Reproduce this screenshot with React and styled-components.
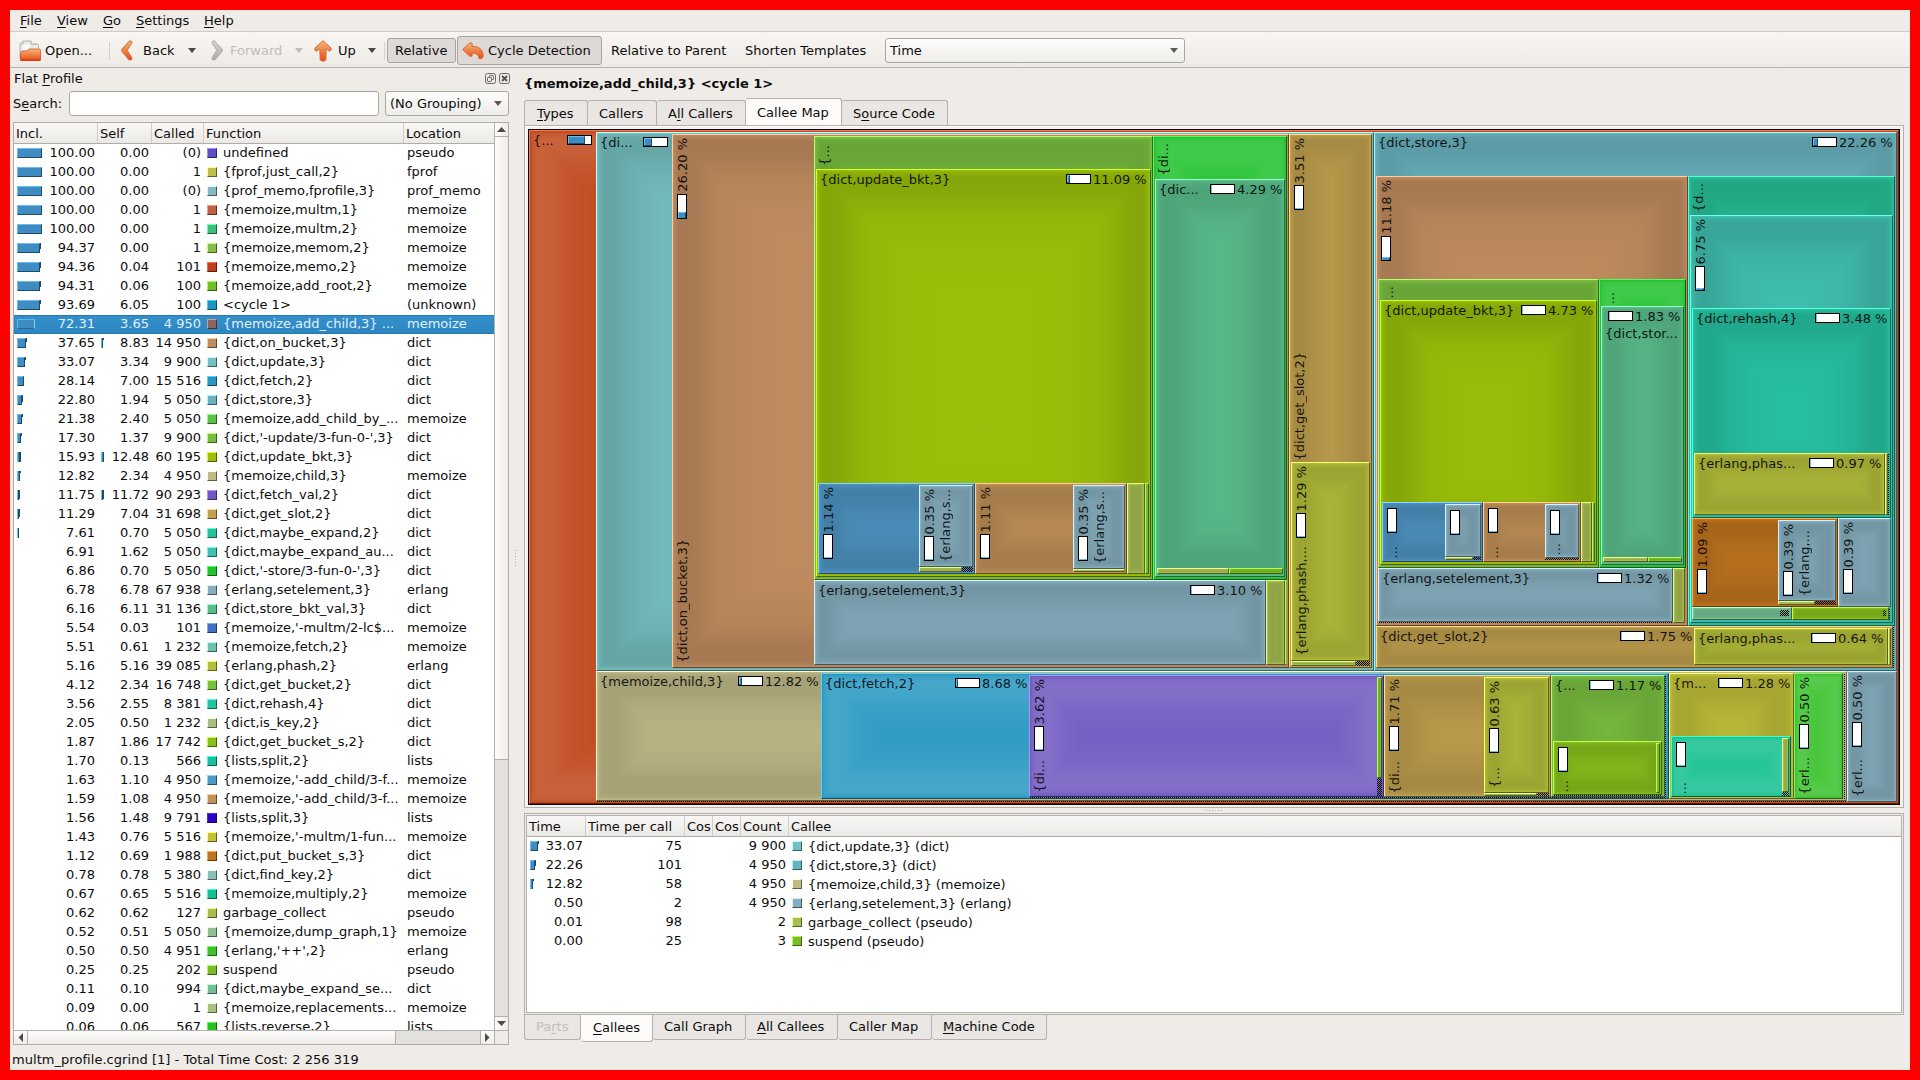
import React from "react";
import styled, { createGlobalStyle, css } from "styled-components";

const GlobalStyle = createGlobalStyle`
  * { box-sizing: border-box; }
  html, body { margin: 0; padding: 0; background: #ff0000; overflow: hidden; }
  body { font-family: "DejaVu Sans", sans-serif; font-size: 13px; line-height: 15px; color: #0c0c0c; }
`;

/* ---------- colour helpers ---------- */

const hexToRgb = (h) => [1, 3, 5].map((i) => parseInt(h.slice(i, i + 2), 16));
const rgb = (c) => `rgb(${c.map((v) => Math.max(0, Math.min(255, Math.round(v)))).join(",")})`;

function lighter(hex, factor = 1.5) {
  const c = hexToRgb(hex);
  const v = Math.max(...c);
  const mn = Math.min(...c);
  let s = v ? ((v - mn) / v) * 255 : 0;
  let nv = v * factor;
  const s0 = s || 1;
  if (nv > 255) {
    s = Math.max(0, s - (nv - 255));
    nv = 255;
  }
  return rgb(c.map((x) => nv * (1 - (1 - x / v) * (s / s0))));
}
const darker = (hex) => rgb(hexToRgb(hex).map((x) => x / 2));

/* concentric one-pixel rings: quick ramp to the edge tone, slow ramp back */
function shadeRings(hex, w, h) {
  const base = hexToRgb(hex);
  const gray = (base[0] * 11 + base[1] * 16 + base[2] * 5) / 32;
  const diff = base.map((b) => (gray > 127.5 ? -b / 7 : (255 - b) / 7));
  const s = Math.min(w, h);
  let forth = 0.7;
  let back1 = 0.9;
  let back2 = 0.97;
  if (s < 100) {
    forth -= (0.3 * (100 - s)) / 100;
    back1 -= (0.2 * (100 - s)) / 100;
    back2 -= (0.02 * (100 - s)) / 100;
  }
  const rings = [];
  let f = 0.1;
  const put = () => rings.push(rgb(base.map((b, i) => Math.floor(b + f * diff[i] + 0.5))));
  const max = Math.ceil(s / 2);
  while (f < 0.95 && rings.length < max) {
    put();
    f = 1 - (1 - f) * forth;
  }
  while (f > 0.7 && rings.length < max) {
    put();
    f = 1 - (1 - f) / back1;
  }
  while (f > 0.01 && rings.length < max) {
    put();
    f *= back2;
  }
  const shadows = [];
  rings.forEach((c, i) => {
    if (i === rings.length - 1 || rings[i + 1] !== c) shadows.push(`inset 0 0 0 ${i + 1}px ${c}`);
  });
  return { boxShadow: shadows.join(","), backgroundColor: rings[rings.length - 1] || hex };
}

/* ---------- function colours ---------- */

const C = {
  addChild: "#c0481c", update: "#76bfc0", onBucket: "#c08c60", updFun: "#7abe40",
  updateBkt: "#9ac00a", stoFun: "#22c22e", storeBkt: "#5abe8c", acFun1: "#4e94c2",
  acFun2: "#c09058", setel: "#86aebe", garbage: "#a8be50", suspend: "#78be28",
  phash: "#b4be3a", getSlot: "#c0a04e", store: "#6ab4c0", expand: "#28c098",
  expandAux: "#40c0b0", rehash: "#26c2a2", putBucket: "#c0741e", expandSe: "#74c494",
  getBucketS: "#88c01c", child: "#c0ba88", fetch: "#2898c2", fetchVal: "#7058c0",
  getBucket: "#7ac040", multm1: "#c0c03a", multiply: "#16c092", plus: "#3cc22e",
};

/* ---------- tree map data: [colour, x, y, w, h, labels, children] ---------- */

const H = (x, y, t) => ({ k: "h", x, y, t });
const V = (x, b, t) => ({ k: "v", x, b, t });
const B = (x, y, p, t) => [{ k: "b", x, y, p }].concat(t ? [H(x + 27, y - 2, t)] : []);
const VB = (x, y, p, t) => [{ k: "vb", x, y, p }].concat(t ? [V(x - 2, y - 2, t)] : []);
const T = (c, x, y, w, h, labels = [], kids = []) => ({ c: C[c], x, y, w, h, labels, kids });
const hatch = (x, y, w, h) => ({ hatch: true, x, y, w, h });

const TREE = T("addChild", 529, 130, 1370, 674, [H(533, 133, "{..."), ...B(567, 135, 0.72)], [
  T("update", 596, 132, 778, 539, [H(600, 135, "{di..."), ...B(643, 137, 0.33)], [
    T("onBucket", 672, 134, 617, 534, [...VB(677, 194, 0.262, "26.20 %"), V(675, 663, "{dict,on_bucket,3}")], [
      T("updFun", 814, 136, 339, 444, [V(817, 166, "{...")], [
        T("updateBkt", 816, 169, 335, 408, [H(820, 172, "{dict,update_bkt,3}"), ...B(1066, 174, 0.11, "11.09 %")], [
          T("acFun1", 818, 483, 157, 91, VB(823, 534, 0.03, "1.14 %"), [
            T("setel", 919, 485, 54, 82, [...VB(924, 536, 0.03, "0.35 %"), V(938, 562, "{erlang,s...")]),
            T("garbage", 919, 567, 43, 5), hatch(962, 567, 11, 5),
          ]),
          T("acFun2", 975, 483, 152, 91, VB(980, 534, 0.03, "1.11 %"), [
            T("setel", 1073, 485, 52, 84, [...VB(1078, 536, 0.03, "0.35 %"), V(1092, 564, "{erlang,s...")]),
            T("garbage", 1073, 569, 52, 3),
          ]),
          T("garbage", 1127, 483, 18, 91),
          T("suspend", 1145, 483, 4, 91),
        ]),
      ]),
      T("stoFun", 1153, 136, 134, 444, [V(1156, 176, "{di...")], [
        T("storeBkt", 1155, 179, 130, 398, [H(1159, 182, "{dic..."), ...B(1210, 184, 0.05, "4.29 %")], [
          T("garbage", 1157, 568, 72, 6), T("suspend", 1229, 568, 54, 6),
        ]),
      ]),
      T("setel", 814, 580, 452, 85, [H(818, 583, "{erlang,setelement,3}"), ...B(1190, 585, 0.03, "3.10 %")]),
      T("garbage", 1266, 580, 19, 85),
      T("suspend", 1285, 580, 2, 85),
    ]),
    T("getSlot", 1289, 134, 83, 534, [...VB(1294, 185, 0.035, "3.51 %"), V(1292, 460, "{dict,get_slot,2}")], [
      T("phash", 1291, 462, 79, 199, [...VB(1296, 513, 0.03, "1.29 %"), V(1294, 656, "{erlang,phash,...")]),
      T("garbage", 1291, 661, 65, 5), hatch(1356, 661, 14, 5),
    ]),
  ]),
  T("store", 1374, 132, 523, 539, [H(1378, 135, "{dict,store,3}"), ...B(1812, 137, 0.2226, "22.26 %")], [
    T("onBucket", 1376, 176, 312, 450, VB(1381, 236, 0.11, "11.18 %"), [
      T("updFun", 1378, 279, 221, 289, [V(1381, 298, "...")], [
        T("updateBkt", 1380, 300, 217, 265, [H(1384, 303, "{dict,update_bkt,3}"), ...B(1521, 305, 0.05, "4.73 %")], [
          T("acFun1", 1382, 502, 101, 60, [...VB(1387, 508, 0.03), V(1385, 558, "...")], [
            T("setel", 1445, 504, 36, 53, VB(1450, 510, 0.03)),
            T("garbage", 1445, 557, 28, 3), hatch(1473, 557, 8, 3),
          ]),
          T("acFun2", 1483, 502, 98, 60, [...VB(1488, 508, 0.03), V(1486, 558, "...")], [
            T("setel", 1545, 504, 34, 54, [...VB(1550, 510, 0.03), V(1548, 555, "...")]),
            hatch(1545, 558, 34, 2),
          ]),
          T("garbage", 1581, 502, 11, 60),
          T("suspend", 1592, 502, 3, 60),
        ]),
      ]),
      T("stoFun", 1599, 279, 87, 289, [V(1602, 304, "...")], [
        T("storeBkt", 1601, 306, 83, 259, [...B(1608, 311, 0.05, "1.83 %"), H(1605, 326, "{dict,stor...")], [
          T("garbage", 1603, 557, 45, 5), T("suspend", 1648, 557, 34, 5),
        ]),
      ]),
      T("setel", 1378, 568, 295, 54, [H(1382, 571, "{erlang,setelement,3}"), ...B(1597, 573, 0.03, "1.32 %")]),
      hatch(1378, 622, 295, 1),
      T("garbage", 1673, 568, 12, 55),
    ]),
    T("expand", 1688, 176, 207, 450, [V(1691, 212, "{d...")], [
      T("expandAux", 1690, 215, 203, 408, VB(1695, 266, 0.0675, "6.75 %"), [
        T("rehash", 1692, 308, 199, 210, [H(1696, 311, "{dict,rehash,4}"), ...B(1815, 313, 0.05, "3.48 %")], [
          T("phash", 1694, 453, 191, 62, [H(1698, 456, "{erlang,phas..."), ...B(1809, 458, 0.03, "0.97 %")]),
          T("garbage", 1885, 453, 3, 62), hatch(1888, 453, 1, 62),
        ]),
        T("putBucket", 1692, 518, 146, 89, VB(1697, 569, 0.03, "1.09 %"), [
          T("setel", 1778, 520, 58, 81, [...VB(1783, 571, 0.03, "0.39 %"), V(1797, 596, "{erlang,...")]),
          T("garbage", 1778, 601, 37, 4), hatch(1815, 601, 21, 4),
        ]),
        T("setel", 1838, 518, 53, 89, VB(1843, 569, 0.03, "0.39 %")),
        T("expandSe", 1692, 607, 100, 13, [], [hatch(1780, 610, 9, 6)]),
        T("getBucketS", 1792, 607, 97, 13, [], [hatch(1883, 610, 3, 6)]),
        hatch(1889, 608, 1, 12),
      ]),
    ]),
    T("getSlot", 1376, 626, 517, 42, [H(1380, 629, "{dict,get_slot,2}"), ...B(1620, 631, 0.03, "1.75 %")], [
      T("phash", 1694, 628, 194, 37, [H(1698, 631, "{erlang,phas..."), ...B(1811, 633, 0.03, "0.64 %")]),
      T("garbage", 1888, 628, 3, 37),
    ]),
    hatch(1893, 626, 1, 42),
  ]),
  T("child", 596, 671, 1251, 130, [H(600, 674, "{memoize,child,3}"), ...B(738, 676, 0.128, "12.82 %")], [
    T("fetch", 821, 673, 848, 126, [H(825, 676, "{dict,fetch,2}"), ...B(955, 678, 0.087, "8.68 %")], [
      T("fetchVal", 1029, 675, 355, 122, [...VB(1034, 726, 0.04, "3.62 %"), V(1032, 793, "{di...")], [
        T("suspend", 1377, 677, 5, 101), hatch(1377, 778, 5, 18),
      ]),
      T("getSlot", 1384, 675, 167, 122, [...VB(1389, 726, 0.05, "1.71 %"), V(1387, 794, "{di...")], [
        T("phash", 1484, 677, 65, 116, [...VB(1489, 728, 0.03, "0.63 %"), V(1487, 788, "{...")]),
        T("garbage", 1484, 793, 53, 3), hatch(1537, 793, 12, 3),
      ]),
      T("getBucket", 1551, 675, 114, 122, [H(1555, 678, "{..."), ...B(1589, 680, 0.03, "1.17 %")], [
        T("getBucketS", 1553, 741, 109, 54, [...VB(1558, 747, 0.03), V(1556, 792, "...")], [
          T("suspend", 1656, 743, 4, 50),
        ]),
        hatch(1553, 795, 109, 1),
      ]),
      hatch(1665, 675, 1, 122),
      hatch(1029, 797, 636, 1),
    ]),
    T("multm1", 1669, 673, 125, 126, [H(1673, 676, "{m..."), ...B(1718, 678, 0.03, "1.28 %")], [
      T("multiply", 1671, 736, 120, 61, [...VB(1676, 742, 0.03), V(1674, 794, "...")], [
        T("garbage", 1782, 738, 7, 54), hatch(1782, 792, 7, 4),
      ]),
    ]),
    T("plus", 1794, 673, 49, 126, [...VB(1799, 724, 0.03, "0.50 %"), V(1797, 795, "{erl...")]),
    hatch(1844, 673, 1, 126),
  ]),
  hatch(596, 801, 1251, 1),
  T("setel", 1847, 671, 50, 131, [...VB(1852, 722, 0.03, "0.50 %"), V(1850, 797, "{erl...")]),
]);

/* ---------- tree map components ---------- */

const TileBox = styled.div`
  display: grid;
  align-content: start;
  justify-content: start;
  overflow: hidden;
  border: 1px solid;
  min-width: 0;
  min-height: 0;
`;
const Hatch = styled.div`
  background: repeating-conic-gradient(#000 0 25%, transparent 0 50%) 0 0 / 2px 2px;
`;
const TileText = styled.div`
  grid-area: 1 / 1 / -1 / -1;
  justify-self: start;
  align-self: ${(p) => (p.$vertical ? "end" : "start")};
  white-space: pre;
  line-height: 15px;
  color: rgba(0, 0, 0, 0.88);
  ${(p) => p.$vertical && css`
    writing-mode: vertical-rl;
    transform: rotate(180deg);
    width: 15px;
  `}
`;
const Meter = styled.div`
  grid-area: 1 / 1 / -1 / -1;
  justify-self: start;
  align-self: start;
  display: flex;
  align-items: ${(p) => (p.$vertical ? "flex-end" : "stretch")};
  width: ${(p) => (p.$vertical ? 10 : 25)}px;
  height: ${(p) => (p.$vertical ? 25 : 10)}px;
  border: 1px solid #000;
  background: #fff;
`;
const MeterFill = styled.div`
  flex: none;
  width: ${(p) => (p.$vertical ? "8px" : `${p.$size}px`)};
  height: ${(p) => (p.$vertical ? `${p.$size}px` : "8px")};
  background: #3e8cc2;
  border-top: 1px solid #6cbcf4;
  border-left: 1px solid #6cbcf4;
  border-right: ${(p) => (p.$size > 1 ? "1px" : "0")} solid #1e4a6c;
  border-bottom: ${(p) => (p.$size > 1 && !p.$vertical ? "1px" : "0")} solid #1e4a6c;
`;

function TileLabel({ l, node }) {
  const left = l.x - node.x - 1;
  if (l.k === "h")
    return <TileText style={{ marginLeft: left, marginTop: l.y - node.y - 1 }}>{l.t}</TileText>;
  if (l.k === "v")
    return (
      <TileText $vertical style={{ marginLeft: left, marginBottom: node.y + node.h - 1 - l.b }}>{l.t}</TileText>
    );
  const vertical = l.k === "vb";
  return (
    <Meter $vertical={vertical} style={{ marginLeft: left, marginTop: l.y - node.y - 1 }}>
      <MeterFill $vertical={vertical} $size={Math.max(1, Math.round(l.p * 23))} />
    </Meter>
  );
}

function Tile({ node, place }) {
  if (node.hatch) return <Hatch style={place} />;
  const thinW = node.w < 3;
  const edges = (a, b, key, size) =>
    [...new Set([a, b, ...node.kids.flatMap((k) => [k[key], k[key] + k[size]])])].sort((m, n) => m - n);
  const xs = edges(node.x + 1, node.x + node.w - 1, "x", "w");
  const ys = edges(node.y + 1, node.y + node.h - 1, "y", "h");
  const tracks = (v) => v.slice(1).map((e, i) => `${e - v[i]}px`).join(" ");
  const hi = lighter(node.c);
  const lo = darker(node.c);
  const style = {
    ...place,
    ...shadeRings(node.c, node.w - 2, node.h - 2),
    gridTemplateColumns: tracks(xs),
    gridTemplateRows: tracks(ys),
    borderColor: `${hi} ${lo} ${lo} ${hi}`,
  };
  if (thinW) style.borderRightWidth = 0;
  return (
    <TileBox style={style}>
      {node.kids.map((k, i) => (
        <Tile
          key={i}
          node={k}
          place={{
            gridColumn: `${xs.indexOf(k.x) + 1} / ${xs.indexOf(k.x + k.w) + 1}`,
            gridRow: `${ys.indexOf(k.y) + 1} / ${ys.indexOf(k.y + k.h) + 1}`,
          }}
        />
      ))}
      {node.labels.map((l, i) => (
        <TileLabel key={`l${i}`} l={l} node={node} />
      ))}
    </TileBox>
  );
}

/* ---------- window chrome ---------- */

const Window = styled.div`
  width: 1900px;
  height: 1060px;
  margin: 10px;
  background: #efebe7;
  display: flex;
  flex-direction: column;
`;
const MenuBar = styled.div`
  height: 22px;
  flex: none;
  padding: 3px 0 0 10px;
  display: flex;
  border-bottom: 1px solid #d0ccc8;
`;
const MenuItem = styled.div`
  width: ${(p) => p.$w}px;
`;
const Key = styled.span`
  text-decoration: underline;
  text-underline-offset: 2px;
  text-decoration-thickness: 1px;
  text-decoration-skip-ink: none;
`;
const ToolBar = styled.div`
  height: 36px;
  flex: none;
  display: flex;
  align-items: center;
  padding: 2px 0 0 9px;
  background: linear-gradient(#f8f5f2, #eeebe7);
  border-bottom: 1px solid #b4b0ac;
`;
const Tool = styled.div`
  display: flex;
  align-items: center;
  flex: none;
  width: ${(p) => p.$w}px;
  height: ${(p) => p.$h || 25}px;
  margin-right: ${(p) => p.$mr || 0}px;
  padding-left: ${(p) => p.$pl || 0}px;
  white-space: pre;
  color: ${(p) => (p.$off ? "#c0bdba" : "inherit")};
  ${(p) => p.$pressed && css`
    border: 1px solid #a6a29f;
    border-radius: 3px;
    background: #dcd9d7;
  `}
`;
const ToolText = styled.span`
  margin-left: ${(p) => p.$ml}px;
  width: ${(p) => (p.$w ? `${p.$w}px` : "auto")};
`;
const Sep = styled.div`
  width: 1px;
  height: 18px;
  flex: none;
  background: #d4d0cc;
  margin-right: ${(p) => p.$mr}px;
`;
const Caret = styled.div`
  width: 0;
  height: 0;
  flex: none;
  border: solid transparent;
  border-width: 5px 4.5px 0;
  border-top-color: ${(p) => p.$c || "#454545"};
`;
const Combo = styled.div`
  display: flex;
  align-items: center;
  justify-content: space-between;
  flex: none;
  width: ${(p) => p.$w}px;
  height: 25px;
  padding: 0 6px 0 4px;
  border: 1px solid #aaa6a2;
  border-radius: 3px;
  background: linear-gradient(#fdfdfc, #efedea);
`;

const Main = styled.div`
  display: flex;
  height: 978px;
  flex: none;
`;
const Dock = styled.div`
  width: 499px;
  flex: none;
  padding-left: 3px;
  display: flex;
  flex-direction: column;
`;
const DockTitle = styled.div`
  height: 23px;
  display: flex;
  align-items: center;
  padding: 0 0 2px 1px;
`;
const DockIcons = styled.div`
  display: flex;
  gap: 3px;
  margin: 0 -1px 0 auto;
  height: 11px;
`;
const SearchRow = styled.div`
  height: 25px;
  display: flex;
  align-items: center;
`;
const SearchLabel = styled.div`
  width: 56px;
  flex: none;
`;
const SearchInput = styled.div`
  width: 310px;
  height: 25px;
  margin-right: 6px;
  border: 1px solid #aaa6a2;
  border-radius: 3px;
  background: #fff;
`;

const ProfileFrame = styled.div`
  margin-top: 6px;
  width: 496px;
  height: 923px;
  border: 1px solid #b0acaa;
  display: grid;
  grid-template-columns: 480px 14px;
  grid-template-rows: 907px 14px;
  background: #fff;
`;
const ListArea = styled.div`
  overflow: hidden;
`;
const HeadRow = styled.div`
  display: flex;
  height: ${(p) => p.$h}px;
  background: linear-gradient(#faf8f6, #ebe9e6);
  border-bottom: 1px solid #b0acaa;
`;
const Head = styled.div`
  width: ${(p) => p.$w}px;
  flex: none;
  overflow: hidden;
  white-space: pre;
  padding: 3px 0 0 2px;
  ${(p) => !p.$last && css`border-right: 1px solid #cfccc9;`}
`;
const Row = styled.div`
  display: flex;
  height: 19px;
  ${(p) => p.$sel && css`
    background: linear-gradient(#3490cc, #2c86c0);
    box-shadow: inset 0 1px #2878ac, inset 0 -1px #2878ac;
    color: #e2f0fb;
  `}
`;
const NumCell = styled.div`
  width: ${(p) => p.$w}px;
  flex: none;
  display: flex;
  justify-content: space-between;
  padding: 1px 3px 0 3px;
  white-space: pre;
`;
const NameCell = styled.div`
  width: ${(p) => p.$w}px;
  flex: none;
  display: flex;
  padding: ${(p) => p.$pt || 1}px 0 0 3px;
  white-space: pre;
`;
const PlainCell = styled.div`
  padding: 1px 0 0 3px;
`;
const CostBar = styled.div`
  width: ${(p) => p.$w}px;
  height: 10px;
  margin-top: 3px;
  border-style: solid;
  border-width: 1px;
  ${(p) => p.$w <= 3 && css`border-width: 0 1px;`}
  border-color: #6cbcf4 #1e4a6c #1e4a6c #6cbcf4;
  background: #3e8cc2;
  ${(p) => p.$sel && css`border-color: #5fb4ea #266896 #266896 #5fb4ea; border-right-color: #8ccbf5;`}
`;
const CostTip = styled.div`
  width: 1px;
  height: ${(p) => p.$h}px;
  margin-top: 3px;
  background: #1e4a6c;
`;
const CostMark = styled.div`
  display: flex;
`;
const Swatch = styled.div`
  width: 10px;
  height: 10px;
  flex: none;
  margin: ${(p) => p.$mt}px 6px 0 0;
  border: 1px solid;
`;
function ColorSwatch({ c, mt = 3 }) {
  return (
    <Swatch
      $mt={mt}
      style={{ background: c, borderColor: `${lighter(c)} ${darker(c)} ${darker(c)} ${lighter(c)}` }}
    />
  );
}

const VScroll = styled.div`
  border-left: 1px solid #b4b0ac;
  display: flex;
  flex-direction: column;
  background: #e3e1de;
`;
const HScroll = styled.div`
  border-top: 1px solid #b4b0ac;
  display: flex;
  background: #e3e1de;
`;
const ScrollCorner = styled.div`
  border-top: 1px solid #b4b0ac;
  border-left: 1px solid #b4b0ac;
  background: #efebe7;
`;
const ScrollPart = styled.div`
  flex: none;
  width: ${(p) => p.$w};
  height: ${(p) => p.$h};
  background: linear-gradient(${(p) => (p.$across ? "to bottom" : "to right")}, #fdfdfc, #eeece9);
  border: 0 solid #b4b0ac;
  border-width: ${(p) => p.$b};
  margin: ${(p) => p.$m || 0};
  display: flex;
  align-items: center;
  justify-content: center;
`;

const SplitV = styled.div`
  width: 15px;
  flex: none;
  display: flex;
  align-items: center;
  justify-content: center;
  padding: 3px 3px 0 0;
`;
const DotsV = styled.div`
  width: 1px;
  height: 17px;
  background: repeating-linear-gradient(#b0aca8 0 1px, transparent 1px 3px);
`;
const SplitH = styled.div`
  height: 5px;
  flex: none;
  display: flex;
  align-items: center;
  justify-content: center;
`;
const DotsH = styled.div`
  height: 1px;
  width: 17px;
  background: repeating-linear-gradient(90deg, #b0aca8 0 1px, transparent 1px 3px);
`;
const Right = styled.div`
  width: 1380px;
  display: flex;
  flex-direction: column;
`;
const Title = styled.div`
  height: 29px;
  flex: none;
  padding: 8px 0 0 0;
  font-weight: bold;
`;
const TabBar = styled.div`
  display: flex;
  flex: none;
  height: ${(p) => (p.$bottom ? 27 : 28)}px;
  align-items: ${(p) => (p.$bottom ? "flex-start" : "flex-end")};
`;
const Tab = styled.div`
  width: ${(p) => p.$w}px;
  height: 25px;
  flex: none;
  padding: 4px 0 0 ${(p) => p.$pl || 11}px;
  white-space: pre;
  background: #e9e6e3;
  border: 1px solid #b4b0ac;
  border-left-width: ${(p) => (p.$first ? 1 : 0)}px;
  color: ${(p) => (p.$off ? "#c2bfbc" : "inherit")};
  ${(p) => (p.$bottom
    ? css`border-top: 0; border-radius: 0 0 3px 3px;`
    : css`border-bottom: 0; border-radius: 3px 3px 0 0; padding-top: 5px;`)}
  ${(p) => p.$active && css`
    height: 27px;
    background: #fcfbf9;
    padding-top: ${p.$bottom ? 5 : 6}px;
  `}
`;
const MapPanel = styled.div`
  height: 683px;
  flex: none;
  width: 1380px;
  padding: 3px 0 0 3px;
  border: 1px solid #b4b0ac;
  background: #f3f0ee;
  box-shadow: inset 1px 1px #fff;
`;
const MapFrame = styled.div`
  display: grid;
  grid-template: 674px / 1370px;
  width: 1372px;
  height: 676px;
  border: 1px solid #000;
`;
const LowerPanel = styled.div`
  width: 1380px;
  height: 202px;
  flex: none;
  padding: 1px;
  border: 1px solid #b4b0ac;
`;
const CalleeTable = styled.div`
  width: 1376px;
  height: 198px;
  border: 1px solid #b4b0ac;
  background: #fff;
  overflow: hidden;
`;
const Status = styled.div`
  flex: 1;
  padding: 6px 0 0 2px;
  letter-spacing: 0.045px;
`;

/* ---------- icons ---------- */

const Gradients = () => (
  <svg width="0" height="0" style={{ display: "block" }}>
    <defs>
      <linearGradient id="org" x1="0" y1="0" x2="0" y2="1">
        <stop offset="0" stopColor="#f5b77a" />
        <stop offset="1" stopColor="#ea4c14" />
      </linearGradient>
      <linearGradient id="gry" x1="0" y1="0" x2="0" y2="1">
        <stop offset="0" stopColor="#d6d4d2" />
        <stop offset="1" stopColor="#aeacaa" />
      </linearGradient>
    </defs>
  </svg>
);
const OpenIcon = () => (
  <svg width="22" height="22" viewBox="0 0 22 22">
    <path d="M1 19V3.5L4.5 1H12v3h6.5l1 1v9H4z" fill="#e9e9e8" stroke="#b0aeac" strokeWidth=".9" />
    <path d="M1.2 4.2h3.3V1M12.500 1v3.500h6" fill="none" stroke="#c2c0be" strokeWidth=".9" />
    <path d="M3.500 4.500h7v6h-7z" fill="#f8f8f8" />
    <path d="M1.500 20.500V12.500l1.500-1.500h5l2-2h10.500l1 1v10.500z" fill="url(#org)" stroke="#d9541c" strokeWidth=".8" />
    <path d="M2 20h19" stroke="#e03c0c" strokeWidth="1.500" />
  </svg>
);
const ChevronLeft = () => (
  <svg width="12" height="21" viewBox="0 0 12 21">
    <path d="M8.600.8 L.8 9.300 Q.3 10.300 .8 11.300 L7.800 19.700 Q9.600 20.600 10.900 19.200 L10.900 17.800 L6.200 10.300 L11.100 2.600 Q11.200 .8 8.600 .8z" fill="url(#org)" stroke="#d2622a" strokeWidth=".9" />
  </svg>
);
const ChevronRight = () => (
  <svg width="12" height="21" viewBox="0 0 12 21">
    <path d="M3.400.8 L11.200 9.300 Q11.700 10.300 11.200 11.300 L4.200 19.700 Q2.400 20.600 1.100 19.200 L1.100 17.800 L5.800 10.300 L.9 2.600 Q.8 .8 3.400 .8z" fill="url(#gry)" stroke="#a6a4a2" strokeWidth=".9" />
  </svg>
);
const UpIcon = () => (
  <svg width="18" height="22" viewBox="0 0 18 22">
    <path d="M9 .7 L17 8 Q17.800 10 16 11.300 L12.200 8.800 L11.800 20 Q9 22.500 6.200 20 L5.800 8.800 L2 11.300 Q.2 10 1 8z" fill="url(#org)" stroke="#d2622a" strokeWidth=".9" />
  </svg>
);
const CycleIcon = () => (
  <svg width="22" height="18" viewBox="0 0 22 18">
    <path d="M.6 7.600 L8 .8 Q10 .4 10.200 2.200 V4.300 Q20.500 4.200 21.300 13.500 Q20.800 17.500 17 16.600 Q16.800 10.900 10.200 11 V13.200 Q9.800 15 7.800 14.200z" fill="url(#org)" stroke="#d2622a" strokeWidth=".9" />
  </svg>
);
const FloatIcon = () => (
  <svg width="11" height="11" viewBox="0 0 11 11" fill="none" stroke="#6a6865">
    <rect x=".5" y=".5" width="10" height="10" rx="2" />
    <rect x="4.500" y="2.500" width="4" height="4" rx=".6" />
    <rect x="2.500" y="4.500" width="4" height="4" rx=".6" fill="#efebe7" />
  </svg>
);
const CloseIcon = () => (
  <svg width="11" height="11" viewBox="0 0 11 11" fill="none" stroke="#6a6865">
    <rect x=".5" y=".5" width="10" height="10" rx="2" />
    <path d="M3 3l5 5M8 3l-5 5" strokeWidth="1.900" stroke="#555" />
  </svg>
);
const Arrow = ({ d }) => (
  <svg width="9" height="9" viewBox="0 0 9 9" fill="#4c4c4c">
    <path d={{ up: "M0 7h9L4.500 2z", down: "M0 2h9L4.500 7z", left: "M7 0v9L2.500 4.500z", right: "M2 0v9L6.500 4.500z" }[d]} />
  </svg>
);

/* ---------- table data ---------- */

const ROWS = [
  ["100.00", "0.00", "(0)", "#5a50c4", "undefined", "pseudo"],
  ["100.00", "0.00", "1", "#bebe4c", "{fprof,just_call,2}", "fprof"],
  ["100.00", "0.00", "(0)", "#86b8be", "{prof_memo,fprofile,3}", "prof_memo"],
  ["100.00", "0.00", "1", "#c06048", "{memoize,multm,1}", "memoize"],
  ["100.00", "0.00", "1", "#3cbe7c", "{memoize,multm,2}", "memoize"],
  ["94.37", "0.00", "1", "#84be48", "{memoize,memom,2}", "memoize"],
  ["94.36", "0.04", "101", "#c03c1c", "{memoize,memo,2}", "memoize"],
  ["94.31", "0.06", "100", "#70be28", "{memoize,add_root,2}", "memoize"],
  ["93.69", "6.05", "100", "#1c94c0", "<cycle 1>", "(unknown)"],
  ["72.31", "3.65", "4 950", "#8c6660", "{memoize,add_child,3} ...", "memoize"],
  ["37.65", "8.83", "14 950", C.onBucket, "{dict,on_bucket,3}", "dict"],
  ["33.07", "3.34", "9 900", C.update, "{dict,update,3}", "dict"],
  ["28.14", "7.00", "15 516", C.fetch, "{dict,fetch,2}", "dict"],
  ["22.80", "1.94", "5 050", C.store, "{dict,store,3}", "dict"],
  ["21.38", "2.40", "5 050", "#5cc04c", "{memoize,add_child_by_...", "memoize"],
  ["17.30", "1.37", "9 900", C.updFun, "{dict,'-update/3-fun-0-',3}", "dict"],
  ["15.93", "12.48", "60 195", C.updateBkt, "{dict,update_bkt,3}", "dict"],
  ["12.82", "2.34", "4 950", C.child, "{memoize,child,3}", "memoize"],
  ["11.75", "11.72", "90 293", C.fetchVal, "{dict,fetch_val,2}", "dict"],
  ["11.29", "7.04", "31 698", C.getSlot, "{dict,get_slot,2}", "dict"],
  ["7.61", "0.70", "5 050", C.expand, "{dict,maybe_expand,2}", "dict"],
  ["6.91", "1.62", "5 050", C.expandAux, "{dict,maybe_expand_au...", "dict"],
  ["6.86", "0.70", "5 050", C.stoFun, "{dict,'-store/3-fun-0-',3}", "dict"],
  ["6.78", "6.78", "67 938", C.setel, "{erlang,setelement,3}", "erlang"],
  ["6.16", "6.11", "31 136", C.storeBkt, "{dict,store_bkt_val,3}", "dict"],
  ["5.54", "0.03", "101", "#4470c4", "{memoize,'-multm/2-lc$...", "memoize"],
  ["5.51", "0.61", "1 232", "#70c0b0", "{memoize,fetch,2}", "memoize"],
  ["5.16", "5.16", "39 085", C.phash, "{erlang,phash,2}", "erlang"],
  ["4.12", "2.34", "16 748", C.getBucket, "{dict,get_bucket,2}", "dict"],
  ["3.56", "2.55", "8 381", C.rehash, "{dict,rehash,4}", "dict"],
  ["2.05", "0.50", "1 232", "#a8be84", "{dict,is_key,2}", "dict"],
  ["1.87", "1.86", "17 742", C.getBucketS, "{dict,get_bucket_s,2}", "dict"],
  ["1.70", "0.13", "566", "#1cbea0", "{lists,split,2}", "lists"],
  ["1.63", "1.10", "4 950", "#5098c4", "{memoize,'-add_child/3-f...", "memoize"],
  ["1.59", "1.08", "4 950", C.acFun2, "{memoize,'-add_child/3-f...", "memoize"],
  ["1.56", "1.48", "9 791", "#2c04be", "{lists,split,3}", "lists"],
  ["1.43", "0.76", "5 516", C.multm1, "{memoize,'-multm/1-fun...", "memoize"],
  ["1.12", "0.69", "1 988", C.putBucket, "{dict,put_bucket_s,3}", "dict"],
  ["0.78", "0.78", "5 380", "#8cc0b4", "{dict,find_key,2}", "dict"],
  ["0.67", "0.65", "5 516", C.multiply, "{memoize,multiply,2}", "memoize"],
  ["0.62", "0.62", "127", C.garbage, "garbage_collect", "pseudo"],
  ["0.52", "0.51", "5 050", "#90c090", "{memoize,dump_graph,1}", "memoize"],
  ["0.50", "0.50", "4 951", C.plus, "{erlang,'++',2}", "erlang"],
  ["0.25", "0.25", "202", C.suspend, "suspend", "pseudo"],
  ["0.11", "0.10", "994", "#74c094", "{dict,maybe_expand_se...", "dict"],
  ["0.09", "0.00", "1", "#a8c080", "{memoize,replacements...", "memoize"],
  ["0.06", "0.06", "567", "#28c020", "{lists,reverse,2}", "lists"],
];
const CALLEES = [
  ["33.07", "75", "9 900", C.update, "{dict,update,3} (dict)"],
  ["22.26", "101", "4 950", C.store, "{dict,store,3} (dict)"],
  ["12.82", "58", "4 950", C.child, "{memoize,child,3} (memoize)"],
  ["0.50", "2", "4 950", C.setel, "{erlang,setelement,3} (erlang)"],
  ["0.01", "98", "2", C.garbage, "garbage_collect (pseudo)"],
  ["0.00", "25", "3", C.suspend, "suspend (pseudo)"],
];

/* whole pixels form the bar, the remainder a shorter column at its end */
function CostGraph({ v, sel }) {
  const exact = v * 0.25;
  const whole = Math.max(2, Math.floor(exact));
  const tip = sel ? 0 : Math.round((exact - whole) * 10);
  return (
    <CostMark>
      <CostBar $w={whole} $sel={sel} />
      {tip > 1 && <CostTip $h={tip} />}
    </CostMark>
  );
}

function Num({ w, v, bar, sel }) {
  return (
    <NumCell $w={w}>
      {bar && parseFloat(v) > 7.5 ? <CostGraph v={parseFloat(v)} sel={sel} /> : <span />}
      <span>{v}</span>
    </NumCell>
  );
}

export default function App() {
  return (
    <>
      <GlobalStyle />
      <Window>
        <Gradients />
        <MenuBar>
          <MenuItem $w={37}><Key>F</Key>ile</MenuItem>
          <MenuItem $w={46}><Key>V</Key>iew</MenuItem>
          <MenuItem $w={33}><Key>G</Key>o</MenuItem>
          <MenuItem $w={68}><Key>S</Key>ettings</MenuItem>
          <MenuItem $w={40}><Key>H</Key>elp</MenuItem>
        </MenuBar>
        <ToolBar>
          <Tool $w={90}><OpenIcon /><ToolText $ml={4}>Open...</ToolText></Tool>
          <Sep $mr={11} />
          <Tool $w={90}><ChevronLeft /><ToolText $ml={10} $w={45}>Back</ToolText><Caret /></Tool>
          <Tool $w={103} $off><ChevronRight /><ToolText $ml={7} $w={65}>Forward</ToolText><Caret $c="#c0bdba" /></Tool>
          <Tool $w={70}><UpIcon /><ToolText $ml={6} $w={30}>Up</ToolText><Caret /></Tool>
          <Sep $mr={2} />
          <Tool $w={69} $mr={1} $pl={7} $pressed>Relative</Tool>
          <Tool $w={145} $h={29} $mr={9} $pl={4} $pressed><CycleIcon /><ToolText $ml={4}>Cycle Detection</ToolText></Tool>
          <Tool $w={134}>Relative to Parent</Tool>
          <Tool $w={140}>Shorten Templates</Tool>
          <Combo $w={300}>Time<Caret $c="#5a5a5a" /></Combo>
        </ToolBar>
        <Main>
          <Dock>
            <DockTitle>
              <span>Flat <Key>P</Key>rofile</span>
              <DockIcons><FloatIcon /><CloseIcon /></DockIcons>
            </DockTitle>
            <SearchRow>
              <SearchLabel>S<Key>e</Key>arch:</SearchLabel>
              <SearchInput />
              <Combo $w={124}>(No Grouping)<Caret $c="#5a5a5a" /></Combo>
            </SearchRow>
            <ProfileFrame>
              <ListArea>
                <HeadRow $h={21}>
                  <Head $w={84}>Incl.</Head>
                  <Head $w={54}>Self</Head>
                  <Head $w={52}>Called</Head>
                  <Head $w={200}>Function</Head>
                  <Head $w={90} $last>Location</Head>
                </HeadRow>
                {ROWS.map((r, i) => (
                  <Row key={i} $sel={i === 9}>
                    <Num w={84} v={r[0]} bar sel={i === 9} />
                    <Num w={54} v={r[1]} bar />
                    <Num w={52} v={r[2]} />
                    <NameCell $w={200}><ColorSwatch c={r[3]} />{r[4]}</NameCell>
                    <PlainCell>{r[5]}</PlainCell>
                  </Row>
                ))}
              </ListArea>
              <VScroll>
                <ScrollPart $w="13px" $h="14px" $b="0 0 1px"><Arrow d="up" /></ScrollPart>
                <ScrollPart $w="13px" $h="623px" $b="0 0 1px" />
                <ScrollPart $w="13px" $h="14px" $b="1px 0 0" $m="auto 0 0"><Arrow d="down" /></ScrollPart>
              </VScroll>
              <HScroll>
                <ScrollPart $across $w="14px" $h="13px" $b="0 1px 0 0"><Arrow d="left" /></ScrollPart>
                <ScrollPart $across $w="368px" $h="13px" $b="0 1px 0 0" />
                <ScrollPart $across $w="14px" $h="13px" $b="0 0 0 1px" $m="0 0 0 auto"><Arrow d="right" /></ScrollPart>
              </HScroll>
              <ScrollCorner />
            </ProfileFrame>
          </Dock>
          <SplitV><DotsV /></SplitV>
          <Right>
            <Title>{"{memoize,add_child,3} <cycle 1>"}</Title>
            <TabBar>
              <Tab $w={64} $first $pl={12}><Key>T</Key>ypes</Tab>
              <Tab $w={69}>Callers</Tab>
              <Tab $w={89}>A<Key>l</Key>l Callers</Tab>
              <Tab $w={96} $active>Callee Map</Tab>
              <Tab $w={106}>S<Key>o</Key>urce Code</Tab>
            </TabBar>
            <MapPanel>
              <MapFrame><Tile node={TREE} /></MapFrame>
            </MapPanel>
            <SplitH><DotsH /></SplitH>
            <LowerPanel>
              <CalleeTable>
                <HeadRow $h={21}>
                  <Head $w={59}>Time</Head>
                  <Head $w={99}>Time per call</Head>
                  <Head $w={28}>Cos</Head>
                  <Head $w={28}>Cos</Head>
                  <Head $w={48}>Count</Head>
                  <Head $w={200} $last>Callee</Head>
                </HeadRow>
                {CALLEES.map((r, i) => (
                  <Row key={i}>
                    <Num w={59} v={r[0]} bar />
                    <Num w={99} v={r[1]} />
                    <Num w={104} v={r[2]} />
                    <NameCell $w={400} $pt={2}><ColorSwatch c={r[3]} mt={2} />{r[4]}</NameCell>
                  </Row>
                ))}
              </CalleeTable>
            </LowerPanel>
            <TabBar $bottom>
              <Tab $bottom $w={57} $first $off>Pa<Key>r</Key>ts</Tab>
              <Tab $bottom $w={72} $active $pl={12}><Key>C</Key>allees</Tab>
              <Tab $bottom $w={93}>Call Graph</Tab>
              <Tab $bottom $w={92}><Key>A</Key>ll Callees</Tab>
              <Tab $bottom $w={94}>Caller Map</Tab>
              <Tab $bottom $w={115}><Key>M</Key>achine Code</Tab>
            </TabBar>
          </Right>
        </Main>
        <Status>multm_profile.cgrind [1] - Total Time Cost: 2 256 319</Status>
      </Window>
    </>
  );
}
